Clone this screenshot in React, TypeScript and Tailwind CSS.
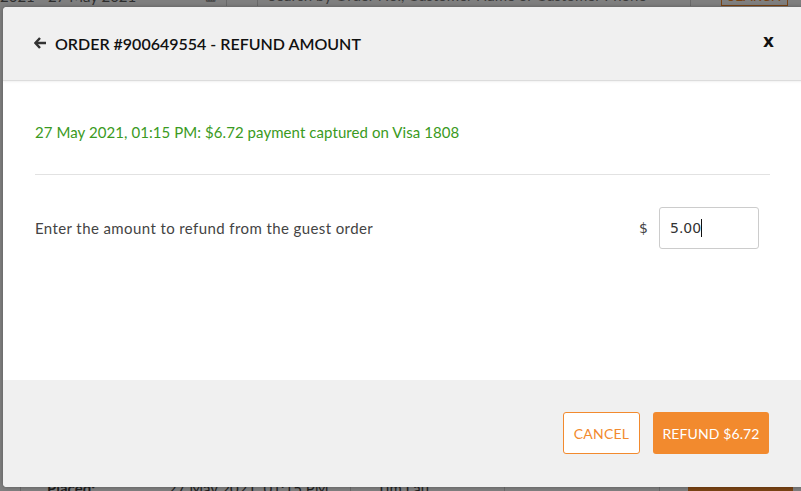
import React from "react";

export default function App() {
  return (
    <div className="relative w-[801px] h-[491px] overflow-hidden bg-[#7f7f7f] font-['Lato',sans-serif]">
      {/* dimmed page behind the modal */}
      <div className="flex flex-col h-full">
        <div className="flex items-end h-[12px] -mt-[6px] text-[15px] leading-[18px] text-[#2e2e2e]">
          <div className="w-[227px] flex items-center justify-between pr-[10px] border-r border-[#6a6a6a] h-[20px]">
            <span>2021 - 27 May 2021</span>
            <span className="text-[12px]">▦</span>
          </div>
          <div className="w-[31px] h-[20px] border-r border-[#6a6a6a]" />
          <div className="w-[433px] h-[20px] pl-[10px] border-r border-[#6a6a6a] text-[#3a3a3a]">
            Search by Order No., Customer Name or Customer Phone
          </div>
          <div className="ml-[30px] w-[67px] h-[20px] border border-[#7a4414] text-[#7a4414] text-center text-[14px]">
            SEARCH
          </div>
        </div>
        <div className="flex-1" />
        <div className="flex items-start h-[12px] text-[15px] leading-[18px] font-bold text-[#1e1e1e]">
          <div className="w-[21px] h-full border-r border-[#6a6a6a]" />
          <div className="pl-[26px] w-[147px]">Placed:</div>
          <div className="w-[183px] h-full border-r border-[#6a6a6a] font-normal">27 May 2021, 01:15 PM</div>
          <div className="w-[154px] h-full pl-[26px] border-r border-[#6a6a6a] font-normal">Tim Lau</div>
          <div className="w-[155px] h-full border-r border-[#6a6a6a]" />
          <div className="ml-[28px] w-[105px] h-full bg-[#7a4414]" />
        </div>
      </div>

      {/* modal */}
      <div className="absolute left-[3px] top-[7px] w-[801px] h-[480px] rounded-[4px] overflow-hidden bg-white flex flex-col shadow-[0_0_4px_rgba(0,0,0,0.3)]">
        <div className="h-[74px] bg-[#f0f0f0] border-b border-[#dcdcdc] flex items-center pl-[31px] pr-[30px] shadow-[0_1px_2px_rgba(0,0,0,0.06)]">
          <svg width="13" height="12" viewBox="0 0 13 12" className="mr-[8px] -mt-[2px]">
            <path d="M6 1 L1.5 6 L6 11" stroke="#333" strokeWidth="2.4" fill="none" strokeLinejoin="miter" />
            <path d="M2 6 H12" stroke="#333" strokeWidth="2.4" />
          </svg>
          <span className="text-[16px] font-semibold text-[#111] mt-[1px]">
            ORDER #900649554 - REFUND AMOUNT
          </span>
          <span className="ml-auto text-[17px] font-semibold text-[#111] font-['DejaVu_Sans',sans-serif] -mt-[4px]">x</span>
        </div>

        <div className="h-[299px] px-[32px] pt-[41px]">
          <div className="text-[15px] tracking-[0.07px] text-[#3a9a22] leading-[20px] pb-[32px] border-b border-[#e2e2e2] mr-[2px]">
            27 May 2021, 01:15 PM: $6.72 payment captured on Visa 1808
          </div>
          <div className="flex items-center mt-[32px] pr-[13px]">
            <span className="text-[15px] tracking-[0.4px] text-[#444]">Enter the amount to refund from the guest order</span>
            <span className="ml-auto mr-[11px] text-[14px] text-[#444] font-['DejaVu_Sans',sans-serif]">$</span>
            <div className="w-[100px] h-[42px] border border-[#cccccc] rounded-[3px] flex items-center pl-[10px] text-[14px] text-[#333] font-['DejaVu_Sans',sans-serif]">
              5.00<span className="inline-block w-[1px] h-[18px] bg-[#111]" />
            </div>
          </div>
        </div>

        <div className="flex-1 bg-[#f0f0f0] flex items-start justify-end pt-[32px] pr-[35px] gap-[13px]">
          <button className="w-[77px] h-[42px] bg-white border border-[#f28a2e] rounded-[3px] text-[#f28a2e] text-[14px] tracking-[0.2px]">
            CANCEL
          </button>
          <button className="w-[116px] h-[42px] bg-[#f28a2e] rounded-[3px] text-white text-[14px] tracking-[0.1px]">
            REFUND $6.72
          </button>
        </div>
      </div>
    </div>
  );
}
